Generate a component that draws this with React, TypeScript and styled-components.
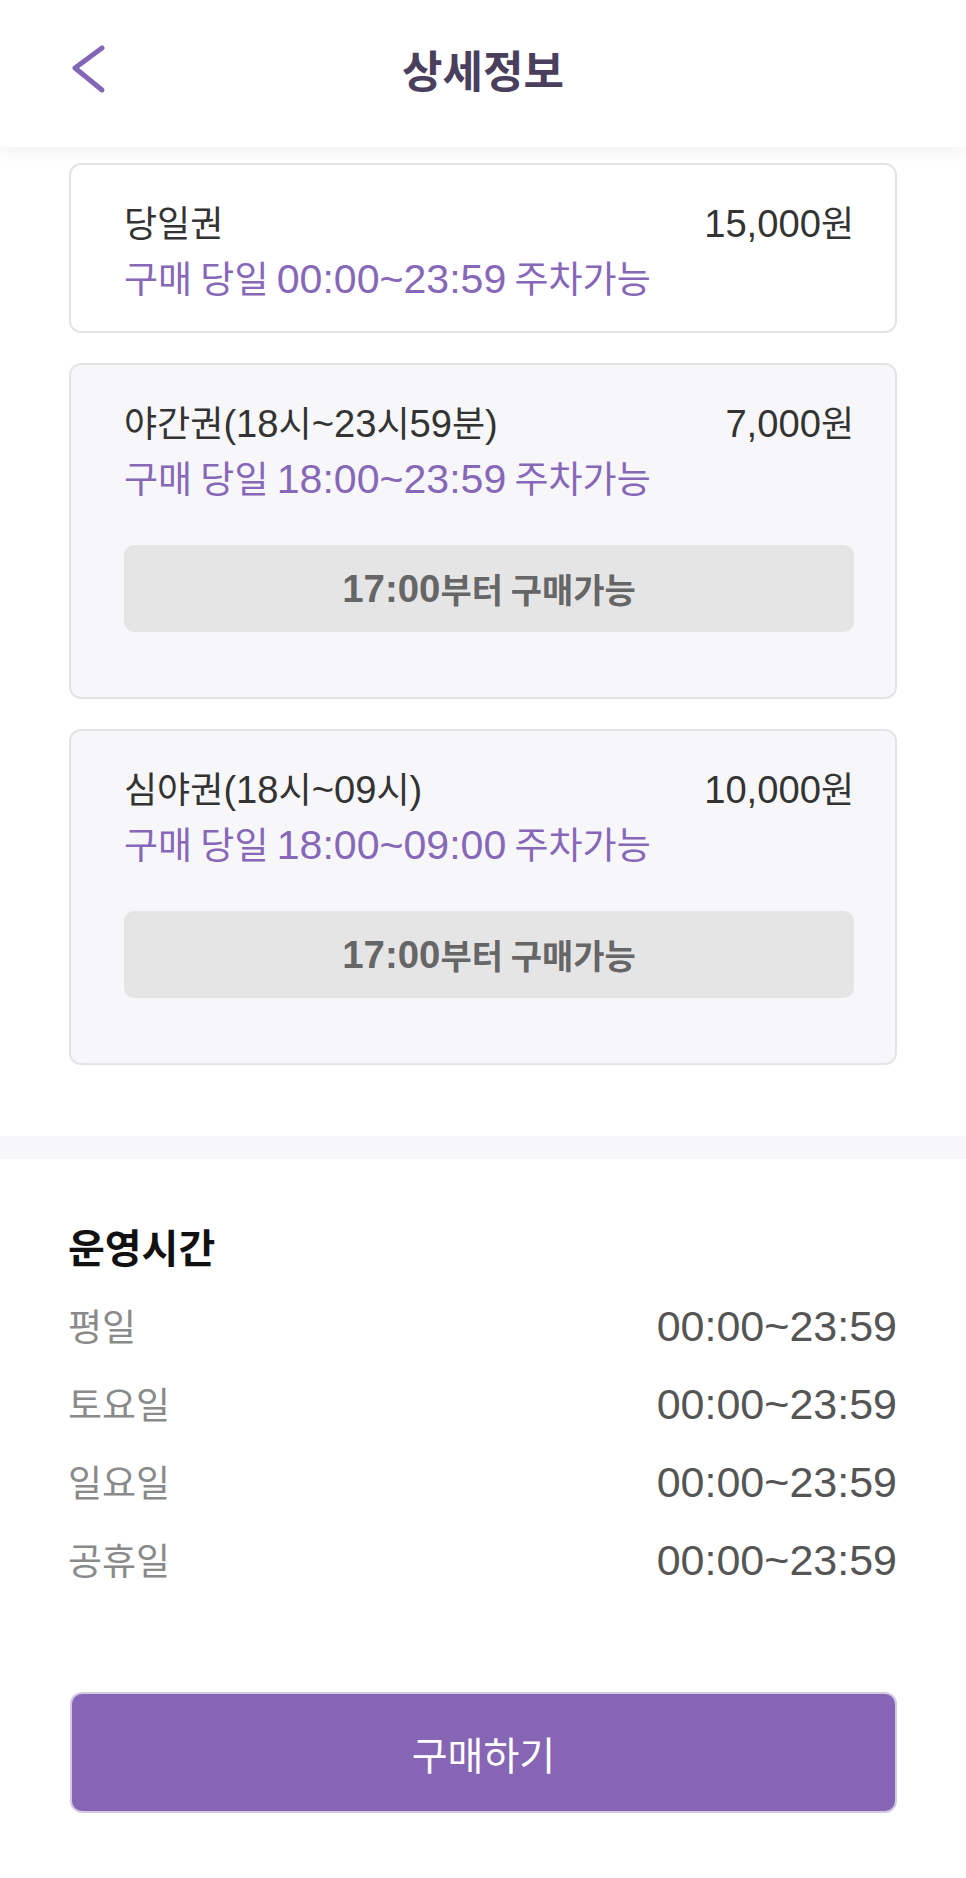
import React from "react";
import styled, { createGlobalStyle } from "styled-components";

const tickets = [
    { name: "당일권", price: "15,000원", desc: "구매 당일 00:00~23:59 주차가능", notice: "" },
    { name: "야간권(18시~23시59분)", price: "7,000원", desc: "구매 당일 18:00~23:59 주차가능", notice: "17:00부터 구매가능" },
    { name: "심야권(18시~09시)", price: "10,000원", desc: "구매 당일 18:00~09:00 주차가능", notice: "17:00부터 구매가능" },
];

const hours = [
    { day: "평일", time: "00:00~23:59" },
    { day: "토요일", time: "00:00~23:59" },
    { day: "일요일", time: "00:00~23:59" },
    { day: "공휴일", time: "00:00~23:59" },
];

// digits in the reference are drawn a bit larger than the hangul next to them
const Mixed = ({ text, scale }: { text: string; scale: number }) => (
    <>
        {text.split(/([\d:,~()]+)/).map((part, i) =>
            i % 2 === 1 ? <Latin key={i} $scale={scale}>{part}</Latin> : part
        )}
    </>
);

const App = () => {
    return (
        <>
        <GlobalStyle />
        <Page>
            <Header>
                <BackButton aria-label="back">
                    <svg width="36" height="50" viewBox="0 0 36 50">
                        <path d="M31 4 L4 24 L31 46" fill="none" stroke="#8466b7" strokeWidth="5" strokeLinecap="round" strokeLinejoin="round" />
                    </svg>
                </BackButton>
                <HeaderTitle>상세정보</HeaderTitle>
                <span />
            </Header>
            <CardList>
                {tickets.map((t) => (
                    <TicketCard key={t.name} $muted={!!t.notice}>
                        <TicketRow>
                            <TicketName><Mixed text={t.name} scale={1.06} /></TicketName>
                            <TicketName><Mixed text={t.price} scale={1.06} /></TicketName>
                        </TicketRow>
                        <TicketDesc><Mixed text={t.desc} scale={1.11} /></TicketDesc>
                        {t.notice && (
                            <NoticeBox><Mixed text={t.notice} scale={1.13} /></NoticeBox>
                        )}
                    </TicketCard>
                ))}
            </CardList>
            <Divider />
            <HoursSection>
                <SectionTitle>운영시간</SectionTitle>
                {hours.map((h) => (
                    <HoursRow key={h.day}>
                        <DayLabel>{h.day}</DayLabel>
                        <TimeLabel>{h.time}</TimeLabel>
                    </HoursRow>
                ))}
                <BuyButton>구매하기</BuyButton>
            </HoursSection>
        </Page>
        </>
    );
};

export default App;

const GlobalStyle = createGlobalStyle`
    * {
        box-sizing: border-box;
    }
    body {
        margin: 0;
        background: #ffffff;
        font-family: "Noto Sans CJK KR", "Noto Sans", sans-serif;
    }
`

const Page = styled.div`
    width: 966px;
    min-height: 1878px;
    background: #ffffff;
`

const Header = styled.header`
    position: relative;
    z-index: 1;
    height: 147px;
    padding-bottom: 9px;
    display: grid;
    grid-template-columns: 1fr auto 1fr;
    align-items: center;
    background: #ffffff;
    box-shadow: 0 5px 14px rgba(40, 30, 70, 0.06);
`

const BackButton = styled.button`
    justify-self: start;
    margin-left: 71px;
    padding: 0;
    border: none;
    background: none;
    display: flex;
    cursor: pointer;
`

const HeaderTitle = styled.h1`
    margin: 0;
    font-size: 44px;
    font-weight: 700;
    line-height: 54px;
    color: #4a3f5d;
`

const CardList = styled.div`
    display: flex;
    flex-direction: column;
    gap: 30px;
    padding: 16px 69px 71px 69px;
`

const TicketCard = styled.div<{ $muted: boolean }>`
    padding: 32px 41px 30px 53px;
    border: 2px solid #e4e4e6;
    border-radius: 12px;
    background: ${(p) => (p.$muted ? "#f7f7f9" : "#ffffff")};
`

const TicketRow = styled.div`
    display: flex;
    justify-content: space-between;
    align-items: baseline;
    height: 48px;
`

const TicketName = styled.span`
    font-size: 36px;
    line-height: 48px;
    color: #333333;
`

const TicketDesc = styled.div`
    margin-top: 8px;
    height: 48px;
    font-size: 37px;
    line-height: 48px;
    color: #8767b8;
`

const Latin = styled.span<{ $scale: number }>`
    font-family: "Liberation Sans", "Noto Sans CJK KR", sans-serif;
    font-size: ${(p) => p.$scale}em;
`

const NoticeBox = styled.div`
    margin: 44px 0 35px;
    height: 87px;
    border-radius: 10px;
    background: #e5e5e6;
    display: flex;
    justify-content: center;
    align-items: center;
    font-size: 34px;
    font-weight: 700;
    line-height: 44px;
    color: #666666;
`

const Divider = styled.div`
    height: 23px;
    background: #f7f7f9;
`

const HoursSection = styled.section`
    padding: 62px 69px 60px 68px;
    display: flex;
    flex-direction: column;
`

const SectionTitle = styled.h2`
    margin: 0 0 29px;
    font-size: 40px;
    font-weight: 700;
    line-height: 50px;
    color: #111111;
`

const HoursRow = styled.div`
    display: flex;
    justify-content: space-between;
    align-items: baseline;
    height: 50px;
    margin-bottom: 28px;
`

const DayLabel = styled.span`
    font-size: 37px;
    line-height: 50px;
    color: #8a8a8a;
`

const TimeLabel = styled.span`
    font-family: "Liberation Sans", sans-serif;
    font-size: 43px;
    line-height: 50px;
    color: #555555;
`

const BuyButton = styled.button`
    margin-top: 80px;
    margin-left: 2px;
    height: 121px;
    border: 2px solid #d4cbe2;
    border-radius: 12px;
    background: #8565b4;
    color: #ffffff;
    font-family: "Noto Sans CJK KR", sans-serif;
    font-size: 39px;
    line-height: 50px;
    cursor: pointer;
`
